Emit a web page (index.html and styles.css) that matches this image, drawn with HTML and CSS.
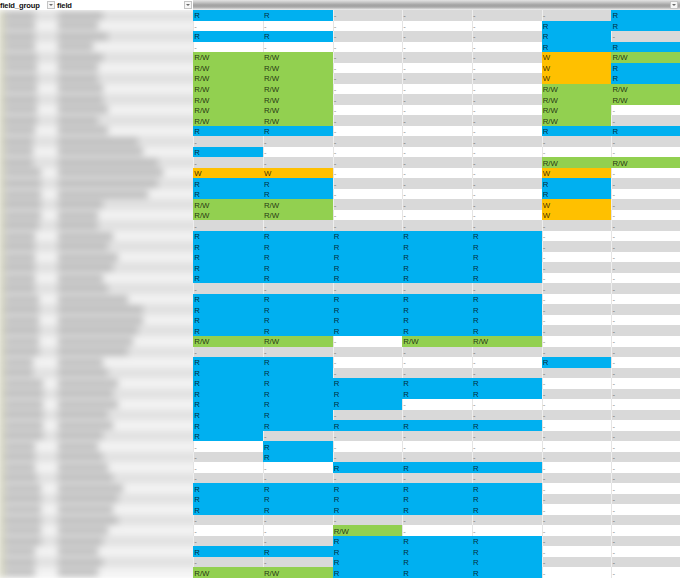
FILE: index.html
```html
<!DOCTYPE html>
<html>
<head>
<meta charset="utf-8">
<link rel="stylesheet" href="styles.css">
</head>
<body>
<div class="sheet">
  <div class="head">
    <div class="hcell group"><span>field_group</span><span class="filter"></span></div>
    <div class="hcell field"><span>field</span><span class="filter"></span></div>
    <div class="hblur"><span class="filter"></span></div>
  </div>
  <div class="main">
    <div class="names-clip">
      <div class="names">
        <div class="nrow"><span class="na"><i class="bar" style="width:30px"></i></span><span class="nb"><i class="bar" style="width:45px"></i></span></div>
        <div class="nrow"><span class="na"><i class="bar" style="width:30px"></i></span><span class="nb"><i class="bar" style="width:40px"></i></span></div>
        <div class="nrow"><span class="na"><i class="bar" style="width:30px"></i></span><span class="nb"><i class="bar" style="width:50px"></i></span></div>
        <div class="nrow"><span class="na"><i class="bar" style="width:30px"></i></span><span class="nb"><i class="bar" style="width:35px"></i></span></div>
        <div class="nrow"><span class="na"><i class="bar" style="width:32px"></i></span><span class="nb"><i class="bar" style="width:45px"></i></span></div>
        <div class="nrow"><span class="na"><i class="bar" style="width:32px"></i></span><span class="nb"><i class="bar" style="width:40px"></i></span></div>
        <div class="nrow"><span class="na"><i class="bar" style="width:32px"></i></span><span class="nb"><i class="bar" style="width:40px"></i></span></div>
        <div class="nrow"><span class="na"><i class="bar" style="width:32px"></i></span><span class="nb"><i class="bar" style="width:45px"></i></span></div>
        <div class="nrow"><span class="na"><i class="bar" style="width:32px"></i></span><span class="nb"><i class="bar" style="width:45px"></i></span></div>
        <div class="nrow"><span class="na"><i class="bar" style="width:32px"></i></span><span class="nb"><i class="bar" style="width:50px"></i></span></div>
        <div class="nrow"><span class="na"><i class="bar" style="width:32px"></i></span><span class="nb"><i class="bar" style="width:40px"></i></span></div>
        <div class="nrow"><span class="na"><i class="bar" style="width:30px"></i></span><span class="nb"><i class="bar" style="width:50px"></i></span></div>
        <div class="nrow"><span class="na"><i class="bar" style="width:28px"></i></span><span class="nb"><i class="bar" style="width:80px"></i></span></div>
        <div class="nrow"><span class="na"><i class="bar" style="width:28px"></i></span><span class="nb"><i class="bar" style="width:85px"></i></span></div>
        <div class="nrow"><span class="na"><i class="bar" style="width:28px"></i></span><span class="nb"><i class="bar" style="width:100px"></i></span></div>
        <div class="nrow"><span class="na"><i class="bar" style="width:36px"></i></span><span class="nb"><i class="bar" style="width:105px"></i></span></div>
        <div class="nrow"><span class="na"><i class="bar" style="width:36px"></i></span><span class="nb"><i class="bar" style="width:100px"></i></span></div>
        <div class="nrow"><span class="na"><i class="bar" style="width:36px"></i></span><span class="nb"><i class="bar" style="width:90px"></i></span></div>
        <div class="nrow"><span class="na"><i class="bar" style="width:36px"></i></span><span class="nb"><i class="bar" style="width:45px"></i></span></div>
        <div class="nrow"><span class="na"><i class="bar" style="width:36px"></i></span><span class="nb"><i class="bar" style="width:40px"></i></span></div>
        <div class="nrow"><span class="na"><i class="bar" style="width:34px"></i></span><span class="nb"><i class="bar" style="width:40px"></i></span></div>
        <div class="nrow"><span class="na"><i class="bar" style="width:30px"></i></span><span class="nb"><i class="bar" style="width:55px"></i></span></div>
        <div class="nrow"><span class="na"><i class="bar" style="width:30px"></i></span><span class="nb"><i class="bar" style="width:50px"></i></span></div>
        <div class="nrow"><span class="na"><i class="bar" style="width:30px"></i></span><span class="nb"><i class="bar" style="width:60px"></i></span></div>
        <div class="nrow"><span class="na"><i class="bar" style="width:30px"></i></span><span class="nb"><i class="bar" style="width:55px"></i></span></div>
        <div class="nrow"><span class="na"><i class="bar" style="width:30px"></i></span><span class="nb"><i class="bar" style="width:45px"></i></span></div>
        <div class="nrow"><span class="na"><i class="bar" style="width:30px"></i></span><span class="nb"><i class="bar" style="width:50px"></i></span></div>
        <div class="nrow"><span class="na"><i class="bar" style="width:34px"></i></span><span class="nb"><i class="bar" style="width:70px"></i></span></div>
        <div class="nrow"><span class="na"><i class="bar" style="width:34px"></i></span><span class="nb"><i class="bar" style="width:85px"></i></span></div>
        <div class="nrow"><span class="na"><i class="bar" style="width:34px"></i></span><span class="nb"><i class="bar" style="width:85px"></i></span></div>
        <div class="nrow"><span class="na"><i class="bar" style="width:34px"></i></span><span class="nb"><i class="bar" style="width:80px"></i></span></div>
        <div class="nrow"><span class="na"><i class="bar" style="width:34px"></i></span><span class="nb"><i class="bar" style="width:75px"></i></span></div>
        <div class="nrow"><span class="na"><i class="bar" style="width:34px"></i></span><span class="nb"><i class="bar" style="width:70px"></i></span></div>
        <div class="nrow"><span class="na"><i class="bar" style="width:28px"></i></span><span class="nb"><i class="bar" style="width:45px"></i></span></div>
        <div class="nrow"><span class="na"><i class="bar" style="width:28px"></i></span><span class="nb"><i class="bar" style="width:50px"></i></span></div>
        <div class="nrow"><span class="na"><i class="bar" style="width:38px"></i></span><span class="nb"><i class="bar" style="width:60px"></i></span></div>
        <div class="nrow"><span class="na"><i class="bar" style="width:38px"></i></span><span class="nb"><i class="bar" style="width:55px"></i></span></div>
        <div class="nrow"><span class="na"><i class="bar" style="width:38px"></i></span><span class="nb"><i class="bar" style="width:60px"></i></span></div>
        <div class="nrow"><span class="na"><i class="bar" style="width:38px"></i></span><span class="nb"><i class="bar" style="width:50px"></i></span></div>
        <div class="nrow"><span class="na"><i class="bar" style="width:38px"></i></span><span class="nb"><i class="bar" style="width:55px"></i></span></div>
        <div class="nrow"><span class="na"><i class="bar" style="width:38px"></i></span><span class="nb"><i class="bar" style="width:45px"></i></span></div>
        <div class="nrow"><span class="na"><i class="bar" style="width:30px"></i></span><span class="nb"><i class="bar" style="width:40px"></i></span></div>
        <div class="nrow"><span class="na"><i class="bar" style="width:30px"></i></span><span class="nb"><i class="bar" style="width:45px"></i></span></div>
        <div class="nrow"><span class="na"><i class="bar" style="width:30px"></i></span><span class="nb"><i class="bar" style="width:50px"></i></span></div>
        <div class="nrow"><span class="na"><i class="bar" style="width:32px"></i></span><span class="nb"><i class="bar" style="width:55px"></i></span></div>
        <div class="nrow"><span class="na"><i class="bar" style="width:36px"></i></span><span class="nb"><i class="bar" style="width:65px"></i></span></div>
        <div class="nrow"><span class="na"><i class="bar" style="width:36px"></i></span><span class="nb"><i class="bar" style="width:60px"></i></span></div>
        <div class="nrow"><span class="na"><i class="bar" style="width:36px"></i></span><span class="nb"><i class="bar" style="width:55px"></i></span></div>
        <div class="nrow"><span class="na"><i class="bar" style="width:36px"></i></span><span class="nb"><i class="bar" style="width:60px"></i></span></div>
        <div class="nrow"><span class="na"><i class="bar" style="width:36px"></i></span><span class="nb"><i class="bar" style="width:50px"></i></span></div>
        <div class="nrow"><span class="na"><i class="bar" style="width:36px"></i></span><span class="nb"><i class="bar" style="width:45px"></i></span></div>
        <div class="nrow"><span class="na"><i class="bar" style="width:30px"></i></span><span class="nb"><i class="bar" style="width:40px"></i></span></div>
        <div class="nrow"><span class="na"><i class="bar" style="width:30px"></i></span><span class="nb"><i class="bar" style="width:45px"></i></span></div>
        <div class="nrow"><span class="na"><i class="bar" style="width:30px"></i></span><span class="nb"><i class="bar" style="width:40px"></i></span></div>
      </div>
    </div>
    <div class="grid">
      <div class="row"><span class="c b">R</span><span class="c b">R</span><span class="c e">-</span><span class="c e">-</span><span class="c e">-</span><span class="c e">-</span><span class="c b">R</span></div>
      <div class="row"><span class="c e">-</span><span class="c e">-</span><span class="c e">-</span><span class="c e">-</span><span class="c e">-</span><span class="c b">R</span><span class="c b">R</span></div>
      <div class="row"><span class="c b">R</span><span class="c b">R</span><span class="c e">-</span><span class="c e">-</span><span class="c e">-</span><span class="c b">R</span><span class="c e">-</span></div>
      <div class="row"><span class="c e">-</span><span class="c e">-</span><span class="c e">-</span><span class="c e">-</span><span class="c e">-</span><span class="c b">R</span><span class="c b">R</span></div>
      <div class="row"><span class="c g">R/W</span><span class="c g">R/W</span><span class="c e">-</span><span class="c e">-</span><span class="c e">-</span><span class="c o">W</span><span class="c g">R/W</span></div>
      <div class="row"><span class="c g">R/W</span><span class="c g">R/W</span><span class="c e">-</span><span class="c e">-</span><span class="c e">-</span><span class="c o">W</span><span class="c b">R</span></div>
      <div class="row"><span class="c g">R/W</span><span class="c g">R/W</span><span class="c e">-</span><span class="c e">-</span><span class="c e">-</span><span class="c o">W</span><span class="c b">R</span></div>
      <div class="row"><span class="c g">R/W</span><span class="c g">R/W</span><span class="c e">-</span><span class="c e">-</span><span class="c e">-</span><span class="c g">R/W</span><span class="c g">R/W</span></div>
      <div class="row"><span class="c g">R/W</span><span class="c g">R/W</span><span class="c e">-</span><span class="c e">-</span><span class="c e">-</span><span class="c g">R/W</span><span class="c g">R/W</span></div>
      <div class="row"><span class="c g">R/W</span><span class="c g">R/W</span><span class="c e">-</span><span class="c e">-</span><span class="c e">-</span><span class="c g">R/W</span><span class="c e">-</span></div>
      <div class="row"><span class="c g">R/W</span><span class="c g">R/W</span><span class="c e">-</span><span class="c e">-</span><span class="c e">-</span><span class="c g">R/W</span><span class="c e">-</span></div>
      <div class="row"><span class="c b">R</span><span class="c b">R</span><span class="c e">-</span><span class="c e">-</span><span class="c e">-</span><span class="c b">R</span><span class="c b">R</span></div>
      <div class="row"><span class="c e">-</span><span class="c e">-</span><span class="c e">-</span><span class="c e">-</span><span class="c e">-</span><span class="c e">-</span><span class="c e">-</span></div>
      <div class="row"><span class="c b">R</span><span class="c e">-</span><span class="c e">-</span><span class="c e">-</span><span class="c e">-</span><span class="c e">-</span><span class="c e">-</span></div>
      <div class="row"><span class="c e">-</span><span class="c e">-</span><span class="c e">-</span><span class="c e">-</span><span class="c e">-</span><span class="c g">R/W</span><span class="c g">R/W</span></div>
      <div class="row"><span class="c o">W</span><span class="c o">W</span><span class="c e">-</span><span class="c e">-</span><span class="c e">-</span><span class="c o">W</span><span class="c e">-</span></div>
      <div class="row"><span class="c b">R</span><span class="c b">R</span><span class="c e">-</span><span class="c e">-</span><span class="c e">-</span><span class="c b">R</span><span class="c e">-</span></div>
      <div class="row"><span class="c b">R</span><span class="c b">R</span><span class="c e">-</span><span class="c e">-</span><span class="c e">-</span><span class="c b">R</span><span class="c e">-</span></div>
      <div class="row"><span class="c g">R/W</span><span class="c g">R/W</span><span class="c e">-</span><span class="c e">-</span><span class="c e">-</span><span class="c o">W</span><span class="c e">-</span></div>
      <div class="row"><span class="c g">R/W</span><span class="c g">R/W</span><span class="c e">-</span><span class="c e">-</span><span class="c e">-</span><span class="c o">W</span><span class="c e">-</span></div>
      <div class="row"><span class="c e">-</span><span class="c e">-</span><span class="c e">-</span><span class="c e">-</span><span class="c e">-</span><span class="c e">-</span><span class="c e">-</span></div>
      <div class="row"><span class="c b">R</span><span class="c b">R</span><span class="c b">R</span><span class="c b">R</span><span class="c b">R</span><span class="c e">-</span><span class="c e">-</span></div>
      <div class="row"><span class="c b">R</span><span class="c b">R</span><span class="c b">R</span><span class="c b">R</span><span class="c b">R</span><span class="c e">-</span><span class="c e">-</span></div>
      <div class="row"><span class="c b">R</span><span class="c b">R</span><span class="c b">R</span><span class="c b">R</span><span class="c b">R</span><span class="c e">-</span><span class="c e">-</span></div>
      <div class="row"><span class="c b">R</span><span class="c b">R</span><span class="c b">R</span><span class="c b">R</span><span class="c b">R</span><span class="c e">-</span><span class="c e">-</span></div>
      <div class="row"><span class="c b">R</span><span class="c b">R</span><span class="c b">R</span><span class="c b">R</span><span class="c b">R</span><span class="c e">-</span><span class="c e">-</span></div>
      <div class="row"><span class="c e">-</span><span class="c e">-</span><span class="c e">-</span><span class="c e">-</span><span class="c e">-</span><span class="c e">-</span><span class="c e">-</span></div>
      <div class="row"><span class="c b">R</span><span class="c b">R</span><span class="c b">R</span><span class="c b">R</span><span class="c b">R</span><span class="c e">-</span><span class="c e">-</span></div>
      <div class="row"><span class="c b">R</span><span class="c b">R</span><span class="c b">R</span><span class="c b">R</span><span class="c b">R</span><span class="c e">-</span><span class="c e">-</span></div>
      <div class="row"><span class="c b">R</span><span class="c b">R</span><span class="c b">R</span><span class="c b">R</span><span class="c b">R</span><span class="c e">-</span><span class="c e">-</span></div>
      <div class="row"><span class="c b">R</span><span class="c b">R</span><span class="c b">R</span><span class="c b">R</span><span class="c b">R</span><span class="c e">-</span><span class="c e">-</span></div>
      <div class="row"><span class="c g">R/W</span><span class="c g">R/W</span><span class="c e">-</span><span class="c g">R/W</span><span class="c g">R/W</span><span class="c e">-</span><span class="c e">-</span></div>
      <div class="row"><span class="c e">-</span><span class="c e">-</span><span class="c e">-</span><span class="c e">-</span><span class="c e">-</span><span class="c e">-</span><span class="c e">-</span></div>
      <div class="row"><span class="c b">R</span><span class="c b">R</span><span class="c e">-</span><span class="c e">-</span><span class="c e">-</span><span class="c b">R</span><span class="c e">-</span></div>
      <div class="row"><span class="c b">R</span><span class="c b">R</span><span class="c e">-</span><span class="c e">-</span><span class="c e">-</span><span class="c e">-</span><span class="c e">-</span></div>
      <div class="row"><span class="c b">R</span><span class="c b">R</span><span class="c b">R</span><span class="c b">R</span><span class="c b">R</span><span class="c e">-</span><span class="c e">-</span></div>
      <div class="row"><span class="c b">R</span><span class="c b">R</span><span class="c b">R</span><span class="c b">R</span><span class="c b">R</span><span class="c e">-</span><span class="c e">-</span></div>
      <div class="row"><span class="c b">R</span><span class="c b">R</span><span class="c b">R</span><span class="c e">-</span><span class="c e">-</span><span class="c e">-</span><span class="c e">-</span></div>
      <div class="row"><span class="c b">R</span><span class="c b">R</span><span class="c e">-</span><span class="c e">-</span><span class="c e">-</span><span class="c e">-</span><span class="c e">-</span></div>
      <div class="row"><span class="c b">R</span><span class="c b">R</span><span class="c b">R</span><span class="c b">R</span><span class="c b">R</span><span class="c e">-</span><span class="c e">-</span></div>
      <div class="row"><span class="c b">R</span><span class="c e">-</span><span class="c e">-</span><span class="c e">-</span><span class="c e">-</span><span class="c e">-</span><span class="c e">-</span></div>
      <div class="row"><span class="c e">-</span><span class="c b">R</span><span class="c e">-</span><span class="c e">-</span><span class="c e">-</span><span class="c e">-</span><span class="c e">-</span></div>
      <div class="row"><span class="c e">-</span><span class="c b">R</span><span class="c e">-</span><span class="c e">-</span><span class="c e">-</span><span class="c e">-</span><span class="c e">-</span></div>
      <div class="row"><span class="c e">-</span><span class="c e">-</span><span class="c b">R</span><span class="c b">R</span><span class="c b">R</span><span class="c e">-</span><span class="c e">-</span></div>
      <div class="row"><span class="c e">-</span><span class="c e">-</span><span class="c e">-</span><span class="c e">-</span><span class="c e">-</span><span class="c e">-</span><span class="c e">-</span></div>
      <div class="row"><span class="c b">R</span><span class="c b">R</span><span class="c b">R</span><span class="c b">R</span><span class="c b">R</span><span class="c e">-</span><span class="c e">-</span></div>
      <div class="row"><span class="c b">R</span><span class="c b">R</span><span class="c b">R</span><span class="c b">R</span><span class="c b">R</span><span class="c e">-</span><span class="c e">-</span></div>
      <div class="row"><span class="c b">R</span><span class="c b">R</span><span class="c b">R</span><span class="c b">R</span><span class="c b">R</span><span class="c e">-</span><span class="c e">-</span></div>
      <div class="row"><span class="c e">-</span><span class="c e">-</span><span class="c e">-</span><span class="c e">-</span><span class="c e">-</span><span class="c e">-</span><span class="c e">-</span></div>
      <div class="row"><span class="c e">-</span><span class="c e">-</span><span class="c g">R/W</span><span class="c e">-</span><span class="c e">-</span><span class="c e">-</span><span class="c e">-</span></div>
      <div class="row"><span class="c e">-</span><span class="c e">-</span><span class="c b">R</span><span class="c b">R</span><span class="c b">R</span><span class="c e">-</span><span class="c e">-</span></div>
      <div class="row"><span class="c b">R</span><span class="c b">R</span><span class="c b">R</span><span class="c b">R</span><span class="c b">R</span><span class="c e">-</span><span class="c e">-</span></div>
      <div class="row"><span class="c e">-</span><span class="c e">-</span><span class="c b">R</span><span class="c b">R</span><span class="c b">R</span><span class="c e">-</span><span class="c e">-</span></div>
      <div class="row"><span class="c g">R/W</span><span class="c g">R/W</span><span class="c b">R</span><span class="c b">R</span><span class="c b">R</span><span class="c e">-</span><span class="c e">-</span></div>
    </div>
  </div>
</div>
</body>
</html>
```

FILE: styles.css
```css
html, body {
  margin: 0;
  padding: 0;
  width: 680px;
  height: 579px;
  overflow: hidden;
  background: #ffffff;
}

body {
  font-family: "Liberation Sans", Arial, sans-serif;
}

.sheet {
  display: flex;
  flex-direction: column;
  width: 682px;
}

.head {
  display: flex;
  height: 10px;
  flex: none;
}

.hcell {
  display: flex;
  align-items: center;
  justify-content: space-between;
  box-sizing: border-box;
  background: #ffffff;
  font-size: 7.6px;
  font-weight: bold;
  color: #111111;
  letter-spacing: -0.15px;
}

.hcell.group {
  width: 55px;
  padding-left: 0;
}

.hcell.field {
  width: 138.3px;
  padding-left: 2px;
  padding-right: 1px;
}

.filter {
  flex: none;
  display: flex;
  align-items: center;
  justify-content: center;
  width: 8px;
  height: 8px;
  box-sizing: border-box;
  border: 1px solid #c4c4c4;
  background: #f6f6f6;
}

.filter::after {
  content: "";
  border-top: 2.5px solid #6a6a6a;
  border-left: 2px solid transparent;
  border-right: 2px solid transparent;
}

.hblur {
  flex: 1;
  display: flex;
  justify-content: flex-end;
  align-items: center;
  padding-right: 4px;
  background: linear-gradient(to bottom, #e4e4e4 0%, #c4c4c4 25%, #a2a2a2 50%, #a8a8a8 70%, #d4d4d4 88%, #f4f4f4 100%);
}

.main {
  display: flex;
}

.names-clip {
  flex: none;
  width: 193.3px;
  overflow: hidden;
}

.names {
  width: 210px;
  filter: blur(3.6px);
  border-left: 5px solid #cfcfb4;
  margin-left: -1px;
}

.nrow {
  display: flex;
  align-items: center;
  height: 10.53px;
  background: #f3f3f3;
}

.nrow:nth-child(odd) {
  background: #e0e0e0;
}

.na {
  width: 50px;
  padding-left: 1px;
  box-sizing: border-box;
  flex: none;
}

.nb {
  padding-left: 4px;
  flex: 1;
}

.bar {
  display: block;
  height: 7px;
  background: #b8b8b8;
}

.grid {
  flex: none;
  display: flex;
  flex-direction: column;
}

.row {
  display: grid;
  grid-template-columns: repeat(7, 69.7px);
  height: 10.53px;
  background: #ffffff;
}

.row:nth-child(odd) {
  background: #d9d9d9;
}

.c {
  display: block;
  box-sizing: border-box;
  height: 10.53px;
  padding: 1.4px 0 0 1px;
  font-size: 7.8px;
  line-height: 9px;
  color: rgba(0, 0, 0, 0.78);
  white-space: nowrap;
  overflow: hidden;
}

.b {
  background: #00b0f0;
}

.g {
  background: #92d050;
}

.o {
  background: #ffc000;
}

.e {
  color: rgba(0, 0, 0, 0.5);
  box-shadow: inset 1px 0 0 #e4e4e4;
}

.row:nth-child(odd) .e {
  box-shadow: inset 1px 0 0 rgba(255, 255, 255, 0.55);
}
```
